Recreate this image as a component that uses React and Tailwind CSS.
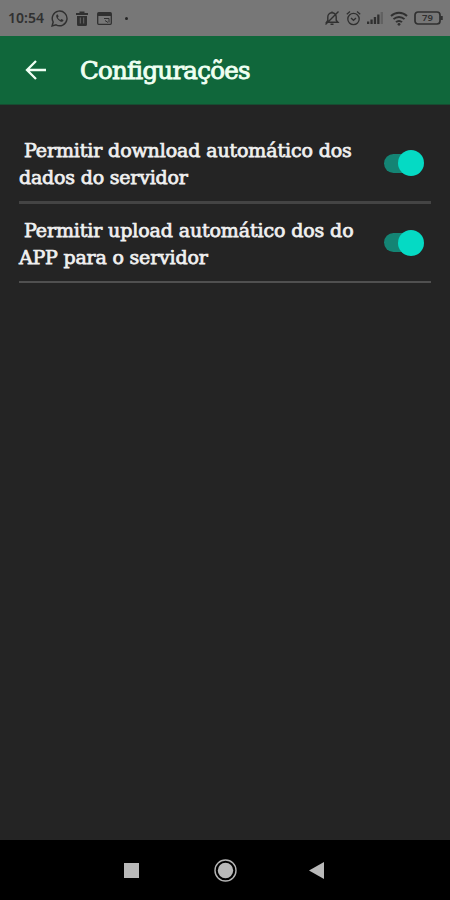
import React from 'react';

const StatusBar = () => (
  <div className="h-9 bg-[#777777] flex items-center justify-between pl-2 pr-[7px] text-[#303030]">
    <div className="flex items-center">
      <span className="w-[43px] font-['Noto_Sans',sans-serif] text-[14px] font-semibold leading-none">10:54</span>
      <svg className="w-[17px] h-[17px]" viewBox="0 0 24 24" fill="none" stroke="currentColor" strokeWidth="2">
        <path d="M1.5 22.5l1.6-5.6a10.4 10.4 0 1 1 4 4z" />
        <path d="M8.3 6.5c-2 1.500-.8 4.500 1.800 7.200s5.600 4 7.200 2l.2-1.500-2.800-1.500-1.500 1.500c-1.500-.5-3-2-3.600-3.500l1.200-1.400-1.200-2.800z" fill="currentColor" stroke="none" />
      </svg>
      <svg className="ml-2 w-3 h-[15px]" viewBox="0 0 12 15" fill="currentColor">
        <path d="M0 2h3.500V.5h5V2H12v2H0zM1 5h10v8.500a1.500 1.500 0 0 1-1.500 1.500h-7A1.500 1.500 0 0 1 1 13.500z" />
        <path d="M4.300 6.500v6M7.700 6.500v6" stroke="#686868" strokeWidth="1" />
      </svg>
      <svg className="ml-[9px] w-[15px] h-[13px]" viewBox="0 0 15 13" fill="none" stroke="currentColor">
        <rect x=".7" y=".7" width="13.600" height="11.600" rx="1" strokeWidth="1.300" />
        <path d="M1 2.500h13" strokeWidth="3" />
        <path d="M7 6.500h5v4M8 8.500l3 2" strokeWidth="1" />
      </svg>
      <span className="ml-[13px] w-[3px] h-[3px] rounded-full bg-[#252525]" />
    </div>
    <div className="flex items-center">
      <svg className="w-4 h-4" viewBox="0 0 16 16" fill="none" stroke="currentColor" strokeWidth="1.400">
        <path d="M2.500 12.300h11.500l-1.800-2V7a4.200 4.200 0 0 0-8.400 0v3.300zM6.500 14.300h3M8 1.500V3M1.500 14.500l13-13" />
      </svg>
      <svg className="ml-1.5 w-[15px] h-4" viewBox="0 0 15 16" fill="none" stroke="currentColor" strokeWidth="1.300">
        <circle cx="7.500" cy="9" r="5.700" />
        <path d="M.8 4.300L4 1.500M14.200 4.300L11 1.500M5 8l2.500 2.300L10 8" />
      </svg>
      <svg className="ml-[6px] w-4 h-3" viewBox="0 0 16 12" fill="currentColor">
        <path d="M0 9.500h2.300V12H0zM3.400 7.500h2.300V12H3.400zM6.800 5h2.300v7H6.800zM10.200 2.500h2.300V12h-2.300z" />
        <path d="M13.600 0h2.300v12h-2.300z" opacity=".3" />
      </svg>
      <svg className="ml-[7px] w-[18px] h-[15px]" viewBox="0 0 18 15" fill="none" stroke="currentColor" strokeWidth="1.900">
        <path d="M1 5a11.500 11.500 0 0 1 16 0M3.500 8.200a7.800 7.800 0 0 1 11 0M6 11.200a4.200 4.200 0 0 1 6 0" />
        <circle cx="9" cy="13.300" r="1.400" fill="currentColor" stroke="none" />
      </svg>
      <svg className="ml-[6px] w-[29px] h-[14px]" viewBox="0 0 29 14" fill="none" stroke="currentColor">
        <rect x="1" y="1" width="25" height="12" rx="3" strokeWidth="1.700" />
        <path d="M27.500 5v4" strokeWidth="2.500" />
        <text x="13.500" y="10.300" textAnchor="middle" fontSize="9.500" fontWeight="600" fontFamily="Noto Sans, sans-serif" fill="currentColor" stroke="none">79</text>
      </svg>
    </div>
  </div>
);

const Header = () => (
  <header className="h-[69px] bg-[#10673b] flex items-center pl-[25px] border-b border-[#174c31]">
    <svg className="w-[22px] h-[22px]" viewBox="0 0 22 22" fill="none" stroke="#f0fff4" strokeWidth="2.300">
      <path d="M21 11H2.500M11 2l-9 9 9 9" />
    </svg>
    <h1 className="ml-[33px] pt-[2px] text-[24.5px] text-[#effff2] whitespace-nowrap tracking-[-0.75px] [-webkit-text-stroke:0.9px_#effff2]">
      Configurações
    </h1>
  </header>
);

const Toggle = () => (
  <button className="relative w-10 h-[26px] flex items-center" role="switch" aria-checked="true">
    <span className="w-9 h-[19px] rounded-full bg-[#148474]" />
    <span className="absolute right-0 top-0 w-[26px] h-[26px] rounded-full bg-[#05dac4]" />
  </button>
);

const SettingRow = ({ first, second, line }) => (
  <div className={`mx-[19px] pr-[7px] flex items-center justify-between ${line}`}>
    <p className="pt-[2px] text-[19px] leading-[27px] text-[#f0f0f0] whitespace-pre [-webkit-text-stroke:0.75px_#f0f0f0]">
      <span className="block pl-[5px] tracking-[-0.12px]">{first}</span>
      <span className="block tracking-[-0.2px]">{second}</span>
    </p>
    <Toggle />
  </div>
);

const NavBar = () => (
  <nav className="h-[60px] bg-black flex items-center">
    <span className="ml-[124px] w-[15px] h-[15px] bg-[#b9b9b9]" />
    <svg className="ml-[75px] w-[23px] h-[23px]" viewBox="0 0 23 23" fill="none">
      <circle cx="11.500" cy="11.500" r="10.500" stroke="#b5b5b5" strokeWidth="1.400" />
      <circle cx="11.500" cy="11.500" r="7.700" fill="#b9b9b9" />
    </svg>
    <svg className="ml-[72px] w-[15px] h-[17px]" viewBox="0 0 15 17">
      <path d="M15 0v17L0 8.500z" fill="#b9b9b9" />
    </svg>
  </nav>
);

const App = () => (
  <div className="w-[450px] h-[900px] bg-[#242424] flex flex-col overflow-hidden font-['DejaVu_Serif',serif]">
    <StatusBar />
    <Header />
    <main className="flex-1">
      <SettingRow
        first="Permitir download automático dos"
        second="dados do servidor"
        line="h-[99px] pt-[20px] border-b-3 border-[#444444]"
      />
      <SettingRow
        first="Permitir upload automático dos do"
        second="APP para o servidor"
        line="h-[79px] border-b-2 border-[#505050]"
      />
    </main>
    <NavBar />
  </div>
);

export default App;
